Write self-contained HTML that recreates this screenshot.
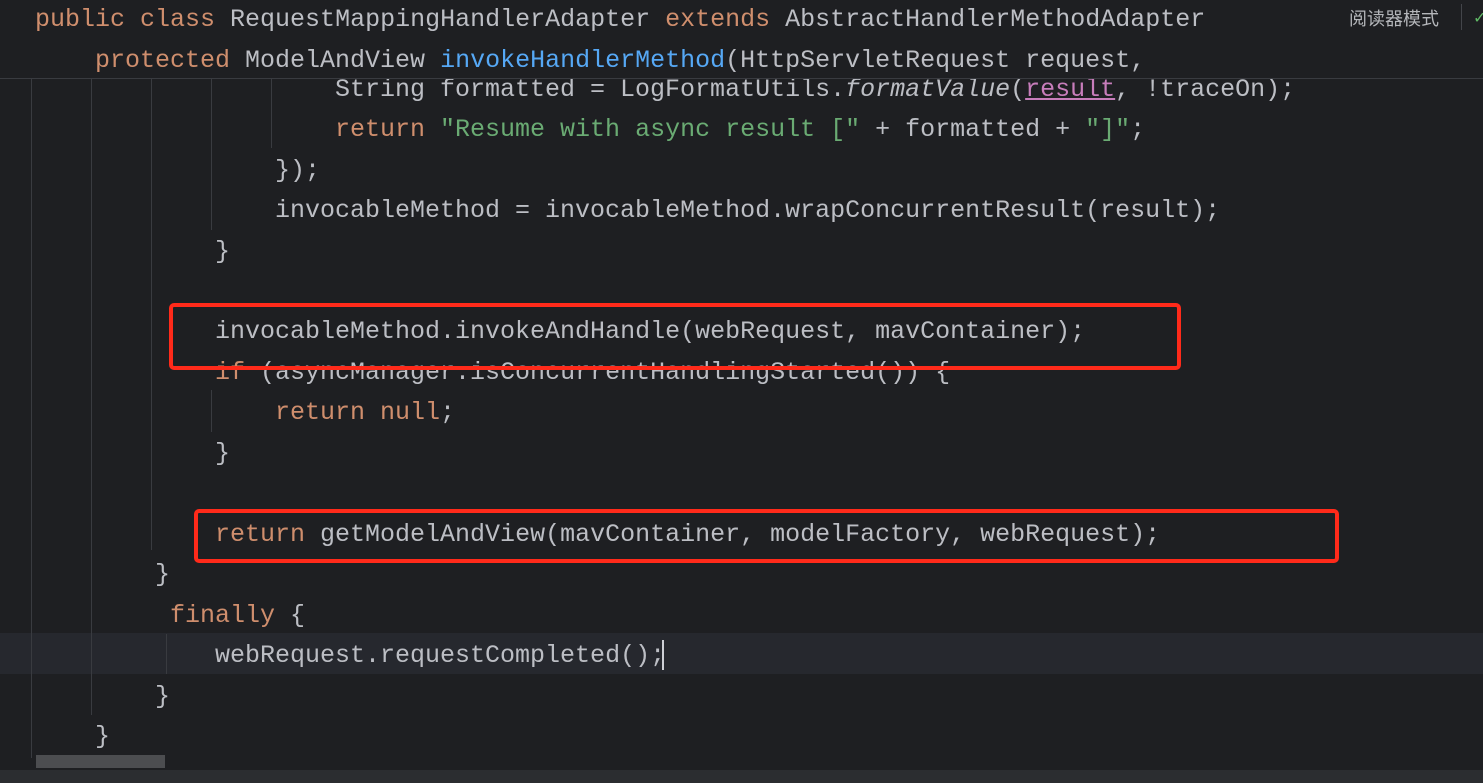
<!DOCTYPE html>
<html><head><meta charset="utf-8"><style>
html,body{margin:0;padding:0;width:1483px;height:783px;overflow:hidden;background:#1e1f22;}
.l{position:absolute;left:0;height:40px;line-height:40px;font-family:"Liberation Mono","DejaVu Sans Mono",monospace;font-size:25px;color:#bcbec4;white-space:pre;margin-top:2px}
.k{color:#cf8e6d}.m{color:#56a8f5}.s{color:#6aab73}.i{font-style:italic}.p{color:#c77dbb;text-decoration:underline}
.g{position:absolute;width:1px;background:#393b40}
.box{position:absolute;border:4px solid #ff2a1a;border-radius:5px;box-sizing:border-box}
</style></head><body>
<div style="position:absolute;left:0;top:633px;width:1483px;height:41px;background:#26282e"></div>
<div class="g" style="left:31px;top:78px;height:680px"></div>
<div class="g" style="left:91px;top:78px;height:637px"></div>
<div class="g" style="left:151px;top:78px;height:472px"></div>
<div class="g" style="left:211px;top:78px;height:152px"></div>
<div class="g" style="left:211px;top:390px;height:42px"></div>
<div class="g" style="left:271px;top:78px;height:70px"></div>
<div class="g" style="left:166px;top:634px;height:40px"></div>

<div class="l" style="top:68px;left:335px">String formatted = LogFormatUtils.<span class="i">formatValue</span>(<span class="p">result</span>, !traceOn);</div>
<div class="l" style="top:108px;left:335px"><span class="k">return </span><span class="s">"Resume with async result ["</span> + formatted + <span class="s">"]"</span>;</div>
<div class="l" style="top:149px;left:275px">});</div>
<div class="l" style="top:189px;left:275px">invocableMethod = invocableMethod.wrapConcurrentResult(result);</div>
<div class="l" style="top:230px;left:215px">}</div>
<div class="l" style="top:310px;left:215px">invocableMethod.invokeAndHandle(webRequest, mavContainer);</div>
<div class="l" style="top:351px;left:215px"><span class="k">if</span> (asyncManager.isConcurrentHandlingStarted()) {</div>
<div class="l" style="top:391px;left:275px"><span class="k">return null</span>;</div>
<div class="l" style="top:432px;left:215px">}</div>
<div class="l" style="top:513px;left:215px"><span class="k">return </span>getModelAndView(mavContainer, modelFactory, webRequest);</div>
<div class="l" style="top:553px;left:155px">}</div>
<div class="l" style="top:594px;left:170px"><span class="k">finally</span> {</div>
<div class="l" style="top:634px;left:215px">webRequest.requestCompleted();</div>
<div style="position:absolute;left:662px;top:640px;width:2px;height:30px;background:#ced0d6"></div>
<div class="l" style="top:675px;left:155px">}</div>
<div class="l" style="top:715px;left:95px">}</div>

<div style="position:absolute;left:0;top:0;width:1483px;height:78px;background:#1e1f22;border-bottom:1px solid #393b40"></div>
<div class="l" style="top:-2px;left:35px"><span class="k">public class </span>RequestMappingHandlerAdapter <span class="k">extends </span>AbstractHandlerMethodAdapter</div>
<div class="l" style="top:39px;left:95px"><span class="k">protected </span>ModelAndView <span class="m">invokeHandlerMethod</span>(HttpServletRequest request,</div>
<div style="position:absolute;left:1349px;top:7px;font-family:'Liberation Sans','Noto Sans CJK SC',sans-serif;font-size:18px;color:#b4b6ba;line-height:24px">阅读器模式</div>
<div style="position:absolute;left:1461px;top:4px;width:1px;height:26px;background:#43454a"></div>
<div style="position:absolute;left:1473px;top:8px;color:#5fb865;font-size:16px;font-family:'DejaVu Sans',sans-serif">✓</div>

<div class="box" style="left:169px;top:303px;width:1012px;height:67px"></div>
<div class="box" style="left:194px;top:509px;width:1145px;height:54px"></div>

<div style="position:absolute;left:0;top:770px;width:1483px;height:13px;background:#2b2d30"></div>
<div style="position:absolute;left:36px;top:755px;width:129px;height:13px;background:#4c4d50"></div>
</body></html>
